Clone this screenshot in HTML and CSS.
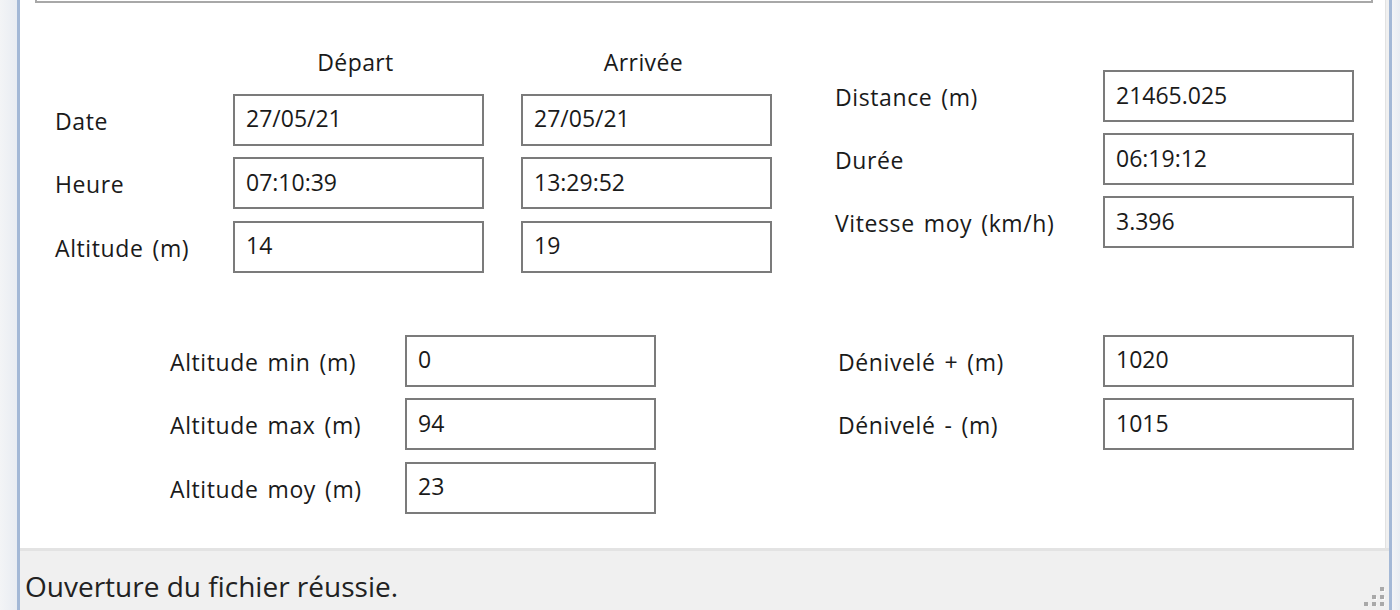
FILE: index.html
```html
<!DOCTYPE html>
<html lang="fr">
<head>
  <meta charset="UTF-8">
  <title>Statistiques du parcours</title>
  <link rel="stylesheet" href="styles.css">
</head>
<body>
  <div class="window">
    <div class="frame frame-left"></div>
    <div class="client">
      <!-- Main panel -->
      <div class="panel">
        <div class="prev-box"></div>

        <div class="top-section">
          <div class="times-grid">
            <span></span>
            <span class="col-head">Départ</span>
            <span class="col-head">Arrivée</span>

            <span class="label">Date</span>
            <div class="field">27/05/21</div>
            <div class="field">27/05/21</div>

            <span class="label">Heure</span>
            <div class="field">07:10:39</div>
            <div class="field">13:29:52</div>

            <span class="label">Altitude (m)</span>
            <div class="field">14</div>
            <div class="field">19</div>
          </div>

          <div class="summary-grid">
            <span class="label">Distance (m)</span>
            <div class="field">21465.025</div>
            <span class="label">Durée</span>
            <div class="field">06:19:12</div>
            <span class="label">Vitesse moy (km/h)</span>
            <div class="field">3.396</div>
          </div>
        </div>

        <div class="bottom-section">
          <div class="alt-grid">
            <span class="label">Altitude min (m)</span>
            <div class="field">0</div>
            <span class="label">Altitude max (m)</span>
            <div class="field">94</div>
            <span class="label">Altitude moy (m)</span>
            <div class="field">23</div>
          </div>

          <div class="elev-grid">
            <span class="label">Dénivelé + (m)</span>
            <div class="field">1020</div>
            <span class="label">Dénivelé - (m)</span>
            <div class="field">1015</div>
          </div>
        </div>
      </div>

      <!-- Status bar -->
      <div class="status">
        <span class="status-text">Ouverture du fichier réussie.</span>
        <svg class="grip" width="22" height="22" viewBox="0 0 22 22">
          <g fill="#fbfbfb">
            <rect x="19" y="5" width="3" height="3"/>
            <rect x="11" y="13" width="3" height="3"/>
            <rect x="19" y="13" width="3" height="3"/>
            <rect x="3" y="21" width="3" height="1"/>
            <rect x="11" y="21" width="3" height="1"/>
            <rect x="19" y="21" width="3" height="1"/>
          </g>
          <g fill="#a9a9a9">
            <rect x="17" y="3" width="4" height="4"/>
            <rect x="9" y="11" width="4" height="4"/>
            <rect x="17" y="11" width="4" height="4"/>
            <rect x="1" y="18" width="4" height="4"/>
            <rect x="9" y="18" width="4" height="4"/>
            <rect x="17" y="18" width="4" height="4"/>
          </g>
        </svg>
      </div>
    </div>
    <div class="frame frame-right"></div>
  </div>
</body>
</html>
```

FILE: styles.css
```css
body {
  margin: 0;
  padding: 0;
  font-family: 'Open Sans', 'Noto Sans', sans-serif;
  color: #1a1a1a;
  background: #eef0f4;
}

/* Window frame */
.window {
  display: flex;
  width: 1400px;
  height: 610px;
  overflow: hidden;
}

.frame {
  flex-shrink: 0;
  background: linear-gradient(to right, #f3f4f6, #e8ecf2);
}

.frame-left {
  width: 17px;
  border-right: 3px solid #a3b8d6;
}

.frame-right {
  width: 8px;
  border-left: 3px solid #a3b8d6;
}

.client {
  flex: 1;
  min-width: 0;
  display: flex;
  flex-direction: column;
  background: #f0f0f0;
}

/* Panel */
.panel {
  flex: 1;
  background: #fff;
  margin-right: 3px;
  border-right: 1px solid #e2e2e2;
}

.prev-box {
  height: 1px;
  margin: 0 12px 0 15px;
  border: 2px solid #a8a8a8;
  border-top: none;
}

.label,
.col-head,
.field {
  font-size: 23px;
  line-height: 30px;
}

.label {
  display: flex;
  align-items: center;
  padding-top: 2px;
  letter-spacing: 0.6px;
  word-spacing: 2.5px;
  white-space: nowrap;
}

.col-head {
  display: flex;
  align-items: center;
  justify-content: center;
  padding-right: 6px;
  letter-spacing: 0.4px;
}

.field {
  display: flex;
  align-items: center;
  box-sizing: border-box;
  height: 52px;
  padding: 0 0 3px 11px;
  border: 2px solid #7b7b7b;
  background: #fff;
}

/* Top section */
.top-section {
  display: flex;
  align-items: flex-start;
  gap: 63px;
  padding: 39px 0 0 35px;
}

.times-grid {
  display: grid;
  grid-template-columns: 141px 251px 251px;
  grid-template-rows: 40px repeat(3, 52px);
  column-gap: 37px;
  row-gap: 11.5px;
}

.summary-grid {
  display: grid;
  grid-template-columns: 268px 251px;
  grid-auto-rows: 52px;
  row-gap: 11px;
  margin-top: 28px;
}

/* Bottom section */
.bottom-section {
  display: flex;
  align-items: flex-start;
  gap: 182px;
  padding: 62px 0 0 150px;
}

.alt-grid {
  display: grid;
  grid-template-columns: 235px 251px;
  grid-auto-rows: 52px;
  row-gap: 11.5px;
}

.elev-grid {
  display: grid;
  grid-template-columns: 265px 251px;
  grid-auto-rows: 52px;
  row-gap: 11.5px;
}

/* Status bar */
.status {
  display: flex;
  align-items: flex-end;
  height: 59px;
  border-top: 3px solid #e3e3e3;
  padding-left: 5px;
}

.status-text {
  font-size: 28px;
  line-height: 38px;
  margin-bottom: 5px;
  color: #222;
}

.grip {
  margin-left: auto;
  margin-right: 4px;
  margin-bottom: 4px;
}
```
